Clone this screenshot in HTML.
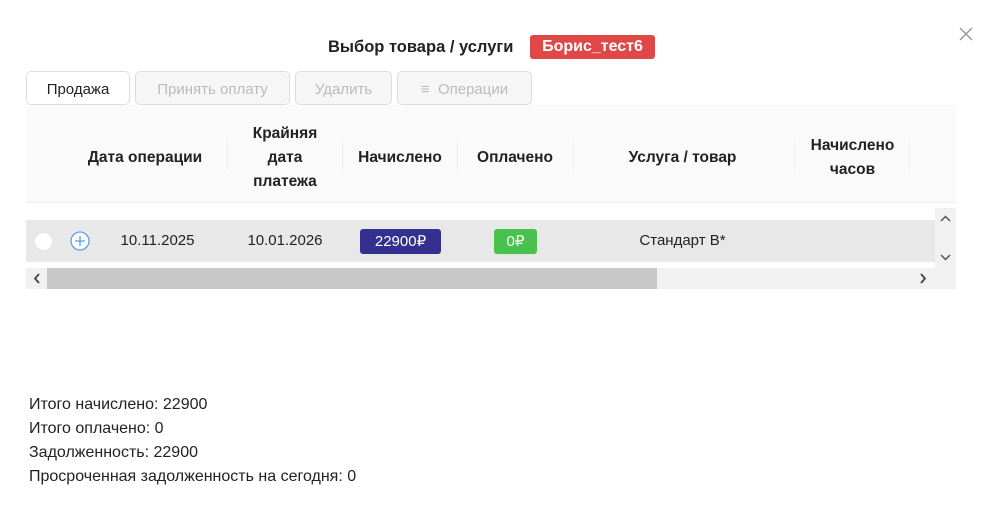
<!DOCTYPE html>
<html><head><meta charset="utf-8"><style>
*{box-sizing:border-box;margin:0;padding:0}
body{width:991px;height:515px;background:#fff;font-family:"Liberation Sans",sans-serif;color:#222;position:relative;overflow:hidden}
.abs{position:absolute}
.btn{position:absolute;top:71px;height:34px;border:1px solid #ddd;border-radius:5px;font-size:15px;line-height:34px;text-align:center;color:#bbb;background:#f6f6f6;padding-top:1px}
.th{position:absolute;font-size:15.5px;font-weight:bold;text-align:center;line-height:24px;color:#222}
.sep{position:absolute;top:140px;width:1px;height:30px;background:#eee}
.tot{position:absolute;left:29px;font-size:16px;color:#222}
</style></head><body>
<svg class="abs" style="left:959px;top:27px" width="14" height="14"><path d="M1 1L13 13M13 1L1 13" stroke="#999" stroke-width="1.5"/></svg>
<div class="abs" style="left:328px;top:37px;font-size:16.5px;font-weight:bold;line-height:20px">Выбор товара / услуги</div>
<div class="abs" style="left:530px;top:35px;width:125px;height:24px;background:#e04848;border-radius:3px;color:#fff;font-weight:bold;font-size:16px;line-height:24px;text-align:center">Борис_тест6</div>
<div class="btn" style="left:26px;width:104px;background:#fff;color:#222">Продажа</div>
<div class="btn" style="left:135px;width:155px">Принять оплату</div>
<div class="btn" style="left:295px;width:97px">Удалить</div>
<div class="btn" style="left:397px;width:135px">≡&nbsp; Операции</div>
<div class="abs" style="left:26px;top:105px;width:930px;height:98px;background:#fafafa;border-bottom:1px solid #eee"></div>
<div class="th" style="left:80px;top:146px;width:130px">Дата операции</div>
<div class="th" style="left:230px;top:122px;width:110px">Крайняя<br>дата<br>платежа</div>
<div class="th" style="left:345px;top:146px;width:110px">Начислено</div>
<div class="th" style="left:460px;top:146px;width:110px">Оплачено</div>
<div class="th" style="left:575px;top:146px;width:215px">Услуга / товар</div>
<div class="th" style="left:795px;top:134px;width:115px">Начислено<br>часов</div>
<div class="sep" style="left:227px"></div><div class="sep" style="left:342px"></div><div class="sep" style="left:457px"></div><div class="sep" style="left:573px"></div><div class="sep" style="left:794px"></div><div class="sep" style="left:909px"></div>
<div class="abs" style="left:26px;top:220px;width:909px;height:42px;background:#e8e8e8"></div>
<div class="abs" style="left:35px;top:233px;width:17px;height:17px;border-radius:50%;background:#fff"></div>
<svg class="abs" style="left:70px;top:231px" width="20" height="20"><circle cx="10" cy="10" r="9" fill="#fff" stroke="#5b9ef0" stroke-width="1.3"/><path d="M10 5V15M5 10H15" stroke="#5b9ef0" stroke-width="1.3"/></svg>
<div class="abs" style="left:100px;top:232px;width:115px;text-align:center;font-size:15px">10.11.2025</div>
<div class="abs" style="left:230px;top:232px;width:110px;text-align:center;font-size:15px">10.01.2026</div>
<div class="abs" style="left:360px;top:229px;width:81px;height:25px;background:#33308f;border-radius:3px;color:#fff;font-size:15px;line-height:25px;text-align:center">22900₽</div>
<div class="abs" style="left:494px;top:229px;width:43px;height:25px;background:#49c24d;border-radius:3px;color:#fff;font-size:15px;line-height:25px;text-align:center">0₽</div>
<div class="abs" style="left:575px;top:232px;width:215px;text-align:center;font-size:15px">Стандарт B*</div>
<div class="abs" style="left:935px;top:208px;width:21px;height:60px;background:#f1f1f1"></div>
<svg class="abs" style="left:935px;top:208px" width="21" height="60"><path d="M6 13L10.5 8.5L15 13M6 47L10.5 51.5L15 47" fill="none" stroke="#555" stroke-width="1.5"/></svg>
<div class="abs" style="left:26px;top:268px;width:930px;height:21px;background:#f1f1f1"></div>
<div class="abs" style="left:47px;top:268px;width:610px;height:21px;background:#c8c8c8"></div>
<svg class="abs" style="left:26px;top:268px" width="930" height="21"><path d="M13 6L9 10.5L13 15M895 6L899 10.5L895 15" fill="none" stroke="#444" stroke-width="1.8"/></svg>
<div class="tot" style="top:396px">Итого начислено: 22900</div>
<div class="tot" style="top:420px">Итого оплачено: 0</div>
<div class="tot" style="top:444px">Задолженность: 22900</div>
<div class="tot" style="top:468px">Просроченная задолженность на сегодня: 0</div>
</body></html>
